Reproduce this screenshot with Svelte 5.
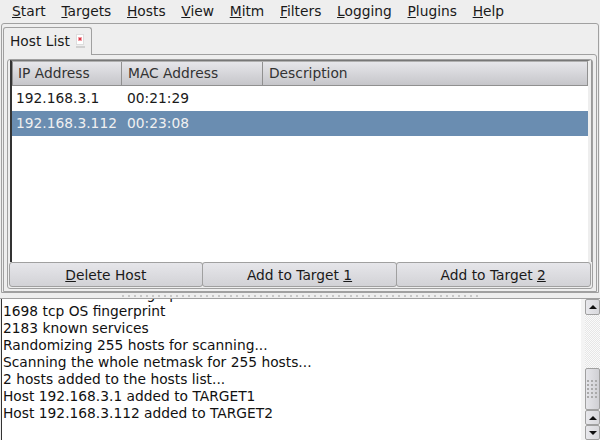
<script>
  const menus = [["S","tart"],["T","argets"],["H","osts"],["V","iew"],["M","itm"],["F","ilters"],["L","ogging"],["P","lugins"],["H","elp"]];
  const logs = ["1766 mac vendor fingerprint","1698 tcp OS fingerprint","2183 known services","Randomizing 255 hosts for scanning...","Scanning the whole netmask for 255 hosts...","2 hosts added to the hosts list...","Host 192.168.3.1 added to TARGET1","Host 192.168.3.112 added to TARGET2"];
</script>

<div class="win">
  <nav class="menu">
    {#each menus as m}<span><u>{m[0]}</u>{m[1]}</span>{/each}
  </nav>
  <div class="notebook">
    <div class="tab">
      <span>Host List</span>
      <svg width="9" height="15" viewBox="0 0 9 15"><rect x="0.5" y="0.5" width="7" height="10" fill="#fff" stroke="#ddd"/><rect x="2" y="3" width="4" height="4" fill="#f4a0a8"/><path d="M3 4l2 2M5 4l-2 2" stroke="#d02030" stroke-width="0.8"/><rect x="0" y="12" width="9" height="2" fill="#d0d0d0"/></svg>
    </div>
    <div class="page">
      <div class="frame">
        <div class="list">
          <div class="head row">
            <div class="c1">IP Address</div><div class="c2">MAC Address</div><div class="c3">Description</div>
          </div>
          <div class="row item"><div class="c1">192.168.3.1</div><div class="c2">00:21:29</div></div>
          <div class="row item sel"><div class="c1">192.168.3.112</div><div class="c2">00:23:08</div></div>
        </div>
        <div class="btns">
          <button><u>D</u>elete Host</button>
          <button>Add to Target <u>1</u></button>
          <button>Add to Target <u>2</u></button>
        </div>
      </div>
    </div>
  </div>
  <div class="handle"><div class="dots"></div></div>
  <div class="bottom">
    <div class="log">
      <div class="lines">
        {#each logs as l}<div>{l}</div>{/each}
      </div>
    </div>
    <div class="sb">
      <div class="arrow big"><i class="up"></i></div>
      <div class="trough"></div>
      <div class="thumb"><div class="grip"></div></div>
      <div class="arrow"><i class="up"></i></div>
      <div class="arrow"><i class="down"></i></div>
    </div>
  </div>
</div>

<style>
  :global(body) { margin: 0; }
  .win { width: 600px; height: 440px; background: #eeeeee; display: flex; flex-direction: column; overflow: hidden; font: 13.8px "DejaVu Sans", sans-serif; color: #1a1a1a; }
  .menu { height: 23px; flex: none; display: flex; gap: 15.7px; padding-left: 12px; align-items: center; box-sizing: border-box; line-height: 23px; }
  .notebook { margin: 0 1px; height: 270px; flex: none; box-sizing: border-box; border: 1px solid #a0a0a0; border-radius: 3px 3px 0 0; padding: 3px 1px 0 1px; display: flex; flex-direction: column; }
  .tab { width: 89px; height: 28px; flex: none; box-sizing: border-box; border: 1px solid #a0a0a0; border-bottom: none; border-radius: 3px 3px 0 0; background: #eeeeee; display: flex; align-items: center; gap: 6px; padding: 0 0 1px 6px; margin-bottom: -1px; position: relative; z-index: 1; }
  .page { flex: 1; min-height: 0; box-sizing: border-box; border: 1px solid #a0a0a0; border-radius: 0 3px 0 0; padding: 4px 3px 2px 3px; display: flex; }
  .frame { flex: 1; min-width: 0; box-sizing: border-box; border: 1px solid #a0a0a0; border-radius: 3px; padding: 0 1px 1px 1px; display: flex; flex-direction: column; }
  .list { flex: 1; min-height: 0; background: #fff; border-left: 2px solid #333; border-top: 1px solid #777; border-right: 3px solid #eeeeee; margin-left: 1px; box-sizing: border-box; box-shadow: 1px 0 0 #999; }
  .row { display: flex; }
  .head { height: 25px; box-sizing: border-box; background: linear-gradient(#e6e6ea, #c6c6ca); border: 1px solid #909090; border-top-color: #b0b0b0; align-items: center; color: #333; }
  .head .c1, .head .c2 { border-right: 1px solid #909090; }
  .head > div { height: 100%; display: flex; align-items: center; box-sizing: border-box; padding-bottom: 1px; }
  .c1 { width: 110px; padding-left: 4px; box-sizing: border-box; flex: none; }
  .c2 { width: 141px; padding-left: 5px; box-sizing: border-box; flex: none; }
  .c3 { padding-left: 6px; }
  .head .c1 { width: 109px; padding-left: 5px; }
  .head .c2 { padding-left: 6px; }
  .item { height: 25px; align-items: center; padding-bottom: 1px; box-sizing: border-box; }
  .sel { background: #6a8db1; color: #f0f0f0; }
  .btns { display: flex; height: 25px; flex: none; margin: 0 1px 0 0; position: relative; }
  button { flex: 1; font: inherit; color: #1a1a1a; padding: 0; margin: 0 -0.5px; height: 25px; border: 1px solid #a0a0a0; border-radius: 3px; background: linear-gradient(#e6e6ea, #d2d2d6); box-sizing: border-box; }
  .handle { height: 5px; flex: none; display: flex; justify-content: center; align-items: center; }
  .dots { width: 357px; height: 2px; background: repeating-linear-gradient(90deg, #c6c6c6 0 2px, transparent 2px 6px); }
  .bottom { flex: 1; min-height: 0; display: flex; border-top: 1px solid #a0a0a0; }
  .log { width: 580px; flex: none; background: #fff; border-left: 1px solid #333; margin-left: 1px; overflow: hidden; box-sizing: border-box; }
  .lines { margin-top: -13px; padding-left: 1px; line-height: 17px; color: #111; }
  .sb { flex: 1; display: flex; flex-direction: column; align-items: flex-end; background: #f4f4f4; }
  .arrow { width: 15px; height: 15px; flex: none; box-sizing: border-box; border: 1px solid #a0a0a0; border-radius: 2px; background: linear-gradient(90deg, #e8e8ec, #d8d8dc); display: flex; align-items: center; justify-content: center; }
  .big { height: 16px; }
  .trough { flex: 1; width: 15px; background: conic-gradient(#e6e6e6 25%, #fafafa 0 50%, #e6e6e6 0 75%, #fafafa 0) 0 0 / 2px 2px; }
  .thumb { width: 15px; height: 42px; flex: none; box-sizing: border-box; border: 1px solid #a0a0a0; border-radius: 2px; background: linear-gradient(90deg, #e6e6ea, #d0d0d4); display: flex; align-items: center; justify-content: center; }
  .grip { width: 12px; height: 18px; background: radial-gradient(circle at 1px 1px, #aaa 1px, transparent 1px) 0 0 / 4px 4px; }
  i { display: block; width: 0; height: 0; border-left: 4px solid transparent; border-right: 4px solid transparent; }
  .up { border-bottom: 4px solid #111; }
  .down { border-top: 4px solid #111; }
</style>
